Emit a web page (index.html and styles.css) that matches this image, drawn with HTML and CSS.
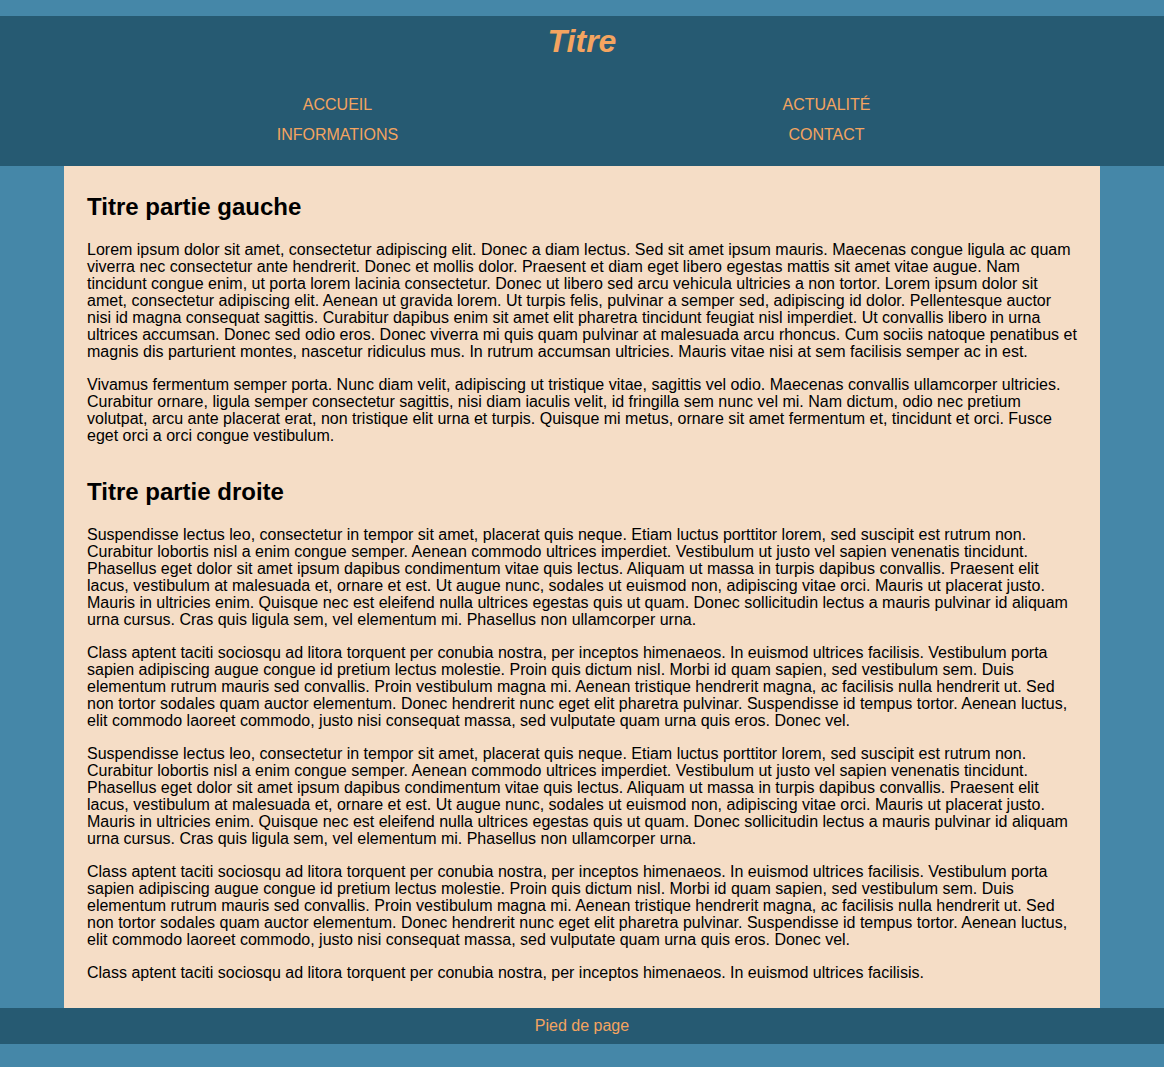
FILE: index.html
```html
<!DOCTYPE html>
<html lang="fr">
<head>
<meta charset="utf-8">
<title>Titre</title>
<link rel="stylesheet" href="styles.css">
</head>
<body>
<header class="site-header">
  <h1 class="site-title">Titre</h1>
  <nav class="site-nav">
    <ul class="nav-list">
      <li class="nav-item">ACCUEIL</li>
      <li class="nav-item">ACTUALITÉ</li>
      <li class="nav-item">INFORMATIONS</li>
      <li class="nav-item">CONTACT</li>
    </ul>
  </nav>
</header>
<main class="content">
  <section class="part">
    <h2 class="part-title">Titre partie gauche</h2>
    <p class="text">Lorem ipsum dolor sit amet, consectetur adipiscing elit. Donec a diam lectus. Sed sit amet ipsum mauris. Maecenas congue ligula ac quam viverra nec consectetur ante hendrerit. Donec et mollis dolor. Praesent et diam eget libero egestas mattis sit amet vitae augue. Nam tincidunt congue enim, ut porta lorem lacinia consectetur. Donec ut libero sed arcu vehicula ultricies a non tortor. Lorem ipsum dolor sit amet, consectetur adipiscing elit. Aenean ut gravida lorem. Ut turpis felis, pulvinar a semper sed, adipiscing id dolor. Pellentesque auctor nisi id magna consequat sagittis. Curabitur dapibus enim sit amet elit pharetra tincidunt feugiat nisl imperdiet. Ut convallis libero in urna ultrices accumsan. Donec sed odio eros. Donec viverra mi quis quam pulvinar at malesuada arcu rhoncus. Cum sociis natoque penatibus et magnis dis parturient montes, nascetur ridiculus mus. In rutrum accumsan ultricies. Mauris vitae nisi at sem facilisis semper ac in est.</p>
    <p class="text">Vivamus fermentum semper porta. Nunc diam velit, adipiscing ut tristique vitae, sagittis vel odio. Maecenas convallis ullamcorper ultricies. Curabitur ornare, ligula semper consectetur sagittis, nisi diam iaculis velit, id fringilla sem nunc vel mi. Nam dictum, odio nec pretium volutpat, arcu ante placerat erat, non tristique elit urna et turpis. Quisque mi metus, ornare sit amet fermentum et, tincidunt et orci. Fusce eget orci a orci congue vestibulum.</p>
  </section>
  <section class="part">
    <h2 class="part-title">Titre partie droite</h2>
    <p class="text">Suspendisse lectus leo, consectetur in tempor sit amet, placerat quis neque. Etiam luctus porttitor lorem, sed suscipit est rutrum non. Curabitur lobortis nisl a enim congue semper. Aenean commodo ultrices imperdiet. Vestibulum ut justo vel sapien venenatis tincidunt. Phasellus eget dolor sit amet ipsum dapibus condimentum vitae quis lectus. Aliquam ut massa in turpis dapibus convallis. Praesent elit lacus, vestibulum at malesuada et, ornare et est. Ut augue nunc, sodales ut euismod non, adipiscing vitae orci. Mauris ut placerat justo. Mauris in ultricies enim. Quisque nec est eleifend nulla ultrices egestas quis ut quam. Donec sollicitudin lectus a mauris pulvinar id aliquam urna cursus. Cras quis ligula sem, vel elementum mi. Phasellus non ullamcorper urna.</p>
    <p class="text">Class aptent taciti sociosqu ad litora torquent per conubia nostra, per inceptos himenaeos. In euismod ultrices facilisis. Vestibulum porta sapien adipiscing augue congue id pretium lectus molestie. Proin quis dictum nisl. Morbi id quam sapien, sed vestibulum sem. Duis elementum rutrum mauris sed convallis. Proin vestibulum magna mi. Aenean tristique hendrerit magna, ac facilisis nulla hendrerit ut. Sed non tortor sodales quam auctor elementum. Donec hendrerit nunc eget elit pharetra pulvinar. Suspendisse id tempus tortor. Aenean luctus, elit commodo laoreet commodo, justo nisi consequat massa, sed vulputate quam urna quis eros. Donec vel.</p>
    <p class="text">Suspendisse lectus leo, consectetur in tempor sit amet, placerat quis neque. Etiam luctus porttitor lorem, sed suscipit est rutrum non. Curabitur lobortis nisl a enim congue semper. Aenean commodo ultrices imperdiet. Vestibulum ut justo vel sapien venenatis tincidunt. Phasellus eget dolor sit amet ipsum dapibus condimentum vitae quis lectus. Aliquam ut massa in turpis dapibus convallis. Praesent elit lacus, vestibulum at malesuada et, ornare et est. Ut augue nunc, sodales ut euismod non, adipiscing vitae orci. Mauris ut placerat justo. Mauris in ultricies enim. Quisque nec est eleifend nulla ultrices egestas quis ut quam. Donec sollicitudin lectus a mauris pulvinar id aliquam urna cursus. Cras quis ligula sem, vel elementum mi. Phasellus non ullamcorper urna.</p>
    <p class="text">Class aptent taciti sociosqu ad litora torquent per conubia nostra, per inceptos himenaeos. In euismod ultrices facilisis. Vestibulum porta sapien adipiscing augue congue id pretium lectus molestie. Proin quis dictum nisl. Morbi id quam sapien, sed vestibulum sem. Duis elementum rutrum mauris sed convallis. Proin vestibulum magna mi. Aenean tristique hendrerit magna, ac facilisis nulla hendrerit ut. Sed non tortor sodales quam auctor elementum. Donec hendrerit nunc eget elit pharetra pulvinar. Suspendisse id tempus tortor. Aenean luctus, elit commodo laoreet commodo, justo nisi consequat massa, sed vulputate quam urna quis eros. Donec vel.</p>
    <p class="text">Class aptent taciti sociosqu ad litora torquent per conubia nostra, per inceptos himenaeos. In euismod ultrices facilisis.</p>
  </section>
</main>
<footer class="site-footer">Pied de page</footer>
</body>
</html>
```

FILE: styles.css
```css
html, body {
  margin: 0;
  padding: 0;
}

body {
  background: #4587a8;
  font-family: "Liberation Sans", Arial, Helvetica, sans-serif;
  font-size: 16px;
  line-height: 17px;
  color: #000;
  padding-top: 16px;
}

.site-header {
  background: #265a72;
  padding: 7px 0 16px;
}

.site-title {
  margin: 0;
  text-align: center;
  font-size: 32px;
  line-height: 37px;
  font-weight: bold;
  font-style: italic;
  color: #f4a460;
}

.site-nav {
  margin-top: 30px;
}

.nav-list {
  list-style: none;
  margin: 0 93px;
  padding: 0;
  display: grid;
  grid-template-columns: 1fr 1fr;
}

.nav-item {
  text-align: center;
  font-size: 16px;
  line-height: 30px;
  color: #f4a460;
}

.content {
  background: #f5ddc6;
  margin: 0 64px;
  padding: 9px 21px 11px 23px;
}

.part {
  display: flow-root;
}

.part-title {
  font-size: 24px;
  line-height: 28px;
  font-weight: bold;
  margin: 18px 0 20px;
}

.text {
  margin: 16px 0;
}

.part-title + .text {
  margin-top: 0;
}

.site-footer {
  background: #265a72;
  color: #f4a460;
  text-align: center;
  line-height: 17px;
  padding: 9px 0 10px;
}
```
